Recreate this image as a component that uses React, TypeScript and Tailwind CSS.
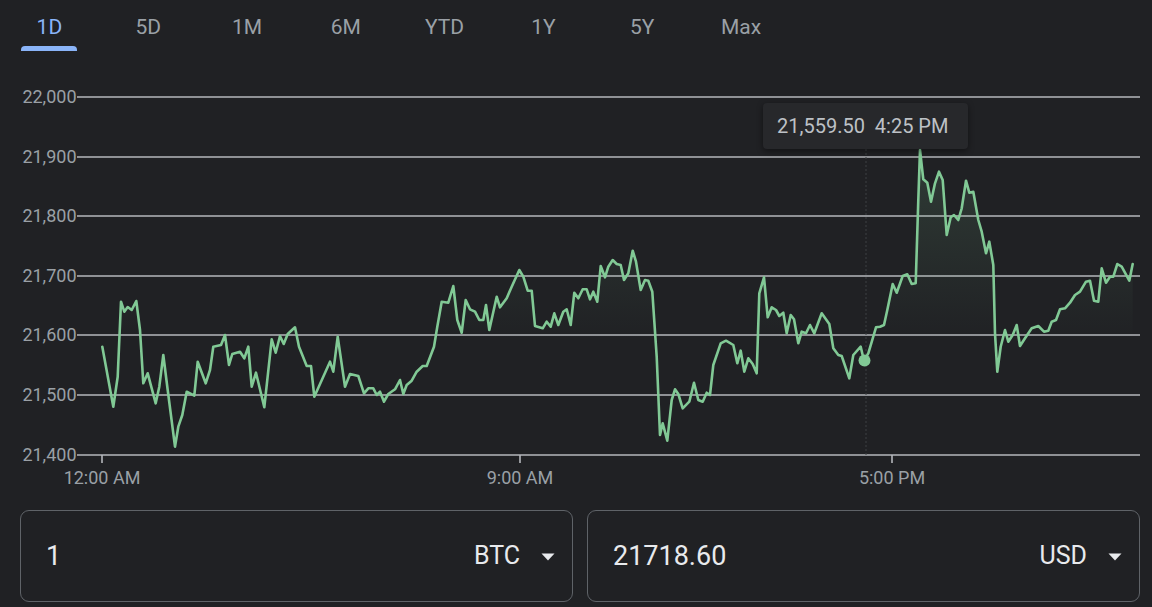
import React from "react";

const pts: [number, number][] = [
  [102.3, 346.7], [113.3, 406.7], [117.7, 376.7], [121, 301.7], [124.3, 311.7], [127.7, 307], [131.7, 310], [136.3, 301],
  [140, 330], [143.3, 383.3], [147.7, 373.3], [155.7, 403.3], [159.3, 386.7], [163.3, 355], [167.7, 390], [175, 446.7],
  [178.3, 426.7], [182.3, 415], [186.7, 391.7], [194.3, 395.7], [197.7, 361.7], [205.7, 383.3], [210, 370], [213.3, 346.7],
  [221, 345], [225, 335], [229, 365], [232.3, 354], [240, 351.7], [244.3, 358.3], [248.3, 346.7], [251.7, 386.7],
  [256, 372.7], [264.3, 407.3], [271.7, 339.3], [275.7, 352.7], [280, 336], [283.7, 344], [287.7, 334], [295, 327.3],
  [299, 346.7], [306.7, 366], [311, 366], [314.3, 396.7], [330, 361.7], [333.3, 371.7], [337.7, 336.7], [345, 386.7],
  [350, 374], [358.3, 376], [364, 393.3], [368.3, 388.3], [373.3, 388.3], [376.7, 395], [380, 391.7], [384, 401.7],
  [388.3, 394], [395, 389.3], [400, 380], [403.3, 394], [406.7, 385], [411.7, 380.7], [416.7, 371.7], [422.7, 366],
  [426.7, 366], [434, 346.7], [437.3, 326.7], [441.7, 301.7], [448.3, 302.7], [453.3, 286], [457.3, 320], [461.7, 332.7],
  [465.7, 300], [470, 309.3], [475, 311.7], [479.3, 320], [483.3, 320], [486, 305], [489.3, 330], [496.7, 296.7],
  [500, 307.3], [506.7, 298.3], [511.7, 286.7], [519.3, 270], [523.3, 276.7], [527.7, 290.7], [531.7, 290.7], [535, 326],
  [542.7, 328.3], [546.7, 321.7], [550.7, 326.7], [554.3, 313.3], [558.3, 325], [563.3, 311.7], [566.7, 309.3], [570.7, 325],
  [574.3, 292.7], [578.3, 298.3], [582.7, 289.3], [586.7, 289.3], [590, 299.3], [593.3, 291.7], [597.3, 301.7], [600.7, 266],
  [605, 277.3], [608.3, 266.7], [612.7, 260], [616.7, 264], [620.7, 265], [624, 280], [628.3, 273.3], [632.7, 250.7],
  [636, 261.7], [640.7, 290], [645, 280], [648.3, 280.7], [652.3, 291.7], [656.7, 356.7], [660, 435], [662.7, 423.3],
  [667.3, 440.7], [671.7, 400], [675, 389.3], [678.3, 394], [682.7, 408.3], [689.3, 401.7], [694, 382.7], [698.3, 400],
  [702.7, 401.7], [706.7, 392.7], [710, 395], [713.3, 365], [720.7, 343.3], [726, 340.7], [733.3, 345], [737.3, 363.3],
  [740.7, 350.7], [744.3, 371.7], [748.3, 358.3], [752.7, 364], [756.7, 373.3], [759.3, 293.3], [764, 277.3], [767.7, 317.3],
  [771.7, 307.3], [776, 310], [779.3, 316], [783.3, 312.7], [786.7, 333.3], [790.7, 315], [794, 319.3], [798.3, 343.3],
  [801.7, 331.7], [806, 333.3], [810, 325], [814.3, 333.3], [821.7, 313.3], [829.3, 324], [833.3, 348.3], [838.3, 355],
  [841.7, 356], [849.3, 378.3], [853.3, 355], [860.7, 346.7], [864, 360.7], [868.3, 353.3], [876, 327.3], [880, 326.7],
  [884, 325], [887.3, 310], [892.7, 284], [896.7, 292.7], [902.7, 276], [907.3, 274.3], [911.7, 284], [915.7, 283.3],
  [918.3, 200], [920, 150], [923.3, 179.3], [927.3, 182.7], [931, 201.7], [935, 183.3], [939, 171.7], [942.7, 180],
  [946.7, 235], [950.7, 217.3], [954, 215], [958.3, 220], [961.7, 208.3], [966, 180.7], [969.3, 192.7], [973.3, 191.7],
  [978.3, 220], [981.7, 231.7], [986, 253.3], [989.3, 241.7], [993.3, 265], [995, 333.3], [997.3, 371.7], [1000.7, 346.7],
  [1005, 330], [1008.3, 341.7], [1012.7, 335], [1016.7, 325], [1020, 346], [1025, 338.3], [1031.7, 328.3], [1038.3, 326],
  [1044, 331.7], [1048.3, 330.7], [1051.7, 321.7], [1056, 320], [1060, 309.3], [1065, 308.3], [1070, 302.7], [1075, 295],
  [1080, 291.7], [1086, 281.7], [1090, 280.7], [1094, 300.7], [1098.3, 301.7], [1101.7, 268.3], [1106, 282.7], [1110, 276.7],
  [1113.3, 276.7], [1117.3, 264], [1121.7, 266.7], [1129.3, 280.7], [1132.7, 264],
];

const linePath = pts.map((p, i) => `${i === 0 ? "M" : "L"}${p[0]},${p[1]}`).join(" ");
const areaPath = `${linePath} L1132.7,455 L102.3,455 Z`;

const gridYs: [number, string][] = [
  [97, "22,000"],
  [157, "21,900"],
  [216, "21,800"],
  [276, "21,700"],
  [335, "21,600"],
  [395, "21,500"],
  [455, "21,400"],
];

const xLabels: [number, string][] = [
  [102, "12:00 AM"],
  [520, "9:00 AM"],
  [892, "5:00 PM"],
];

const tabs = ["1D", "5D", "1M", "6M", "YTD", "1Y", "5Y", "Max"];

function Caret() {
  return (
    <svg width="14" height="8" viewBox="0 0 14 8" className="shrink-0">
      <path d="M0.5 0.5 L13.5 0.5 L7 7.5 Z" fill="#e8eaed" />
    </svg>
  );
}

function InputBox({ value, unit }: { value: string; unit: string }) {
  return (
    <div className="flex h-[92px] w-[553px] items-center rounded-[9px] border border-[#5f6368] pl-[25px] pr-[17px]">
      <span className="flex-1 text-[27px] text-[#e8eaed]">{value}</span>
      <span className="text-[25px] text-[#e8eaed]">{unit}</span>
      <span className="ml-[21px] flex items-center pt-[2px]">
        <Caret />
      </span>
    </div>
  );
}

export default function App() {
  return (
    <div
      className="h-[607px] w-[1152px] overflow-hidden bg-[#202124]"
      style={{ fontFamily: "Roboto, 'Liberation Sans', sans-serif" }}
    >
      <div className="flex h-[60px] items-start">
        {tabs.map((t, i) => (
          <div key={t} className="flex w-[98.8px] flex-col items-center pt-[12px]">
            <span className={`text-[21px] leading-[30px] ${i === 0 ? "text-[#8ab4f8]" : "text-[#9aa0a6]"}`}>{t}</span>
            {i === 0 && <div className="mt-[4px] h-[5px] w-[56px] rounded-t-[4px] bg-[#8ab4f8]" />}
          </div>
        ))}
      </div>

      <div className="relative h-[450px] w-full">
        <svg width="1152" height="450" viewBox="0 60 1152 450" className="block">
          <defs>
            <linearGradient id="fillG" gradientUnits="userSpaceOnUse" x1="0" y1="150" x2="0" y2="340">
              <stop offset="0" stopColor="#81c995" stopOpacity="0.16" />
              <stop offset="1" stopColor="#81c995" stopOpacity="0" />
            </linearGradient>
          </defs>
          {gridYs.map(([y, label]) => (
            <g key={label}>
              <line x1="77" x2="1140" y1={y} y2={y} stroke="#b4b7bb" strokeWidth="1.6" />
              <text
                x="76.5"
                y={y + 6.4}
                textAnchor="end"
                fontSize="18"
                fill="#9aa0a6"
                fontFamily="Roboto, 'Liberation Sans', sans-serif"
              >
                {label}
              </text>
            </g>
          ))}
          {xLabels.map(([x, label]) => (
            <g key={label}>
              <line x1={x} x2={x} y1="455" y2="463" stroke="#b4b7bb" strokeWidth="1.6" />
              <text
                x={x}
                y="483.5"
                textAnchor="middle"
                fontSize="18"
                fill="#9aa0a6"
                fontFamily="Roboto, 'Liberation Sans', sans-serif"
              >
                {label}
              </text>
            </g>
          ))}
          <line x1="866" x2="866" y1="149" y2="455" stroke="#3c4043" strokeWidth="1" strokeDasharray="2 2" />
          <path d={areaPath} fill="url(#fillG)" />
          <path d={linePath} fill="none" stroke="#81c995" strokeWidth="2.6" strokeLinejoin="round" strokeLinecap="round" />
          <circle cx="864.5" cy="360.5" r="6" fill="#81c995" />
        </svg>
        <div className="absolute left-[763px] top-[43px] flex h-[46px] w-[205px] items-center rounded-[4px] bg-[#27282b] pl-[14px] shadow-[0_2px_6px_rgba(0,0,0,0.45)]">
          <span className="whitespace-pre text-[20px] text-[#bdc1c6]">21,559.50  4:25 PM</span>
        </div>
      </div>

      <div className="flex gap-[14px] pl-[20px]">
        <InputBox value="1" unit="BTC" />
        <InputBox value="21718.60" unit="USD" />
      </div>
    </div>
  );
}
